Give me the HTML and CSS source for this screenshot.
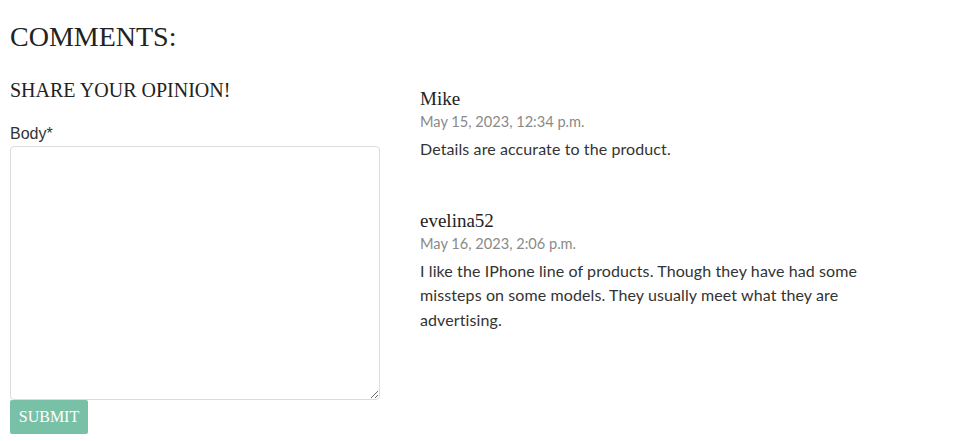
FILE: index.html
```html
<!DOCTYPE html>
<html lang="en">
<head>
<meta charset="utf-8">
<title>Comments</title>
<link rel="stylesheet" href="styles.css">
</head>
<body>
<section class="comments">
  <h2 class="comments-title">COMMENTS:</h2>
  <div class="comments-row">
    <div class="form-col">
      <h3 class="form-title">SHARE YOUR OPINION!</h3>
      <form class="comment-form">
        <label class="field-label" for="body">Body*</label>
        <textarea id="body" class="field-textarea"></textarea>
        <button type="button" class="btn-submit">SUBMIT</button>
      </form>
    </div>
    <div class="list-col">
      <article class="comment">
        <h4 class="comment-author">Mike</h4>
        <p class="comment-date">May 15, 2023, 12:34 p.m.</p>
        <p class="comment-body">Details are accurate to the product.</p>
      </article>
      <article class="comment">
        <h4 class="comment-author">evelina52</h4>
        <p class="comment-date">May 16, 2023, 2:06 p.m.</p>
        <p class="comment-body">I like the IPhone line of products. Though they have had some missteps on some models. They usually meet what they are advertising.</p>
      </article>
    </div>
  </div>
</section>
</body>
</html>
```
FILE: styles.css
```css
* { box-sizing: border-box; }
body {
  margin: 0;
  background: #fff;
  color: #222;
  font-family: "Lato", "Noto Sans", sans-serif;
}
.comments {
  padding: 19px 10px 0 10px;
}
.comments-title {
  margin: 0 0 23px 0;
  font-family: "Liberation Serif", serif;
  font-weight: 400;
  font-size: 28px;
  line-height: 36px;
  color: #222;
}
.comments-row {
  display: flex;
  gap: 40px;
}
.form-col {
  width: 370px;
  flex: none;
}
.form-title {
  margin: 0 0 22px 0;
  font-family: "Liberation Serif", serif;
  font-weight: 400;
  font-size: 20px;
  line-height: 24px;
  color: #222;
}
.comment-form {
  display: flex;
  flex-direction: column;
  align-items: flex-start;
}
.field-label {
  font-family: "Liberation Sans", Arial, sans-serif;
  font-size: 16px;
  line-height: 20px;
  color: #333;
  margin-bottom: 2px;
}
.field-textarea {
  width: 370px;
  height: 254px;
  border: 1px solid #dcdcdc;
  border-radius: 4px;
  resize: vertical;
  display: block;
  margin: 0;
}
.btn-submit {
  margin: 0;
  width: 78px;
  height: 34px;
  border: none;
  border-radius: 2px;
  background: #78c1a6;
  color: #fff;
  font-family: "Liberation Serif", serif;
  font-size: 16px;
  padding: 0;
}
.list-col {
  flex: 1;
  max-width: 470px;
  padding-top: 10px;
}
.comment {
  margin-bottom: 48px;
}
.comment-author {
  margin: 0;
  font-family: "Liberation Serif", serif;
  font-weight: 400;
  font-size: 19px;
  line-height: 22px;
  color: #222;
}
.comment-date {
  margin: 2px 0 5px 0;
  font-size: 14.6px;
  line-height: 20px;
  color: #8a8a8a;
}
.comment-body {
  margin: 0;
  font-size: 16px;
  letter-spacing: 0.1px;
  line-height: 24.5px;
  color: #333;
}
```
